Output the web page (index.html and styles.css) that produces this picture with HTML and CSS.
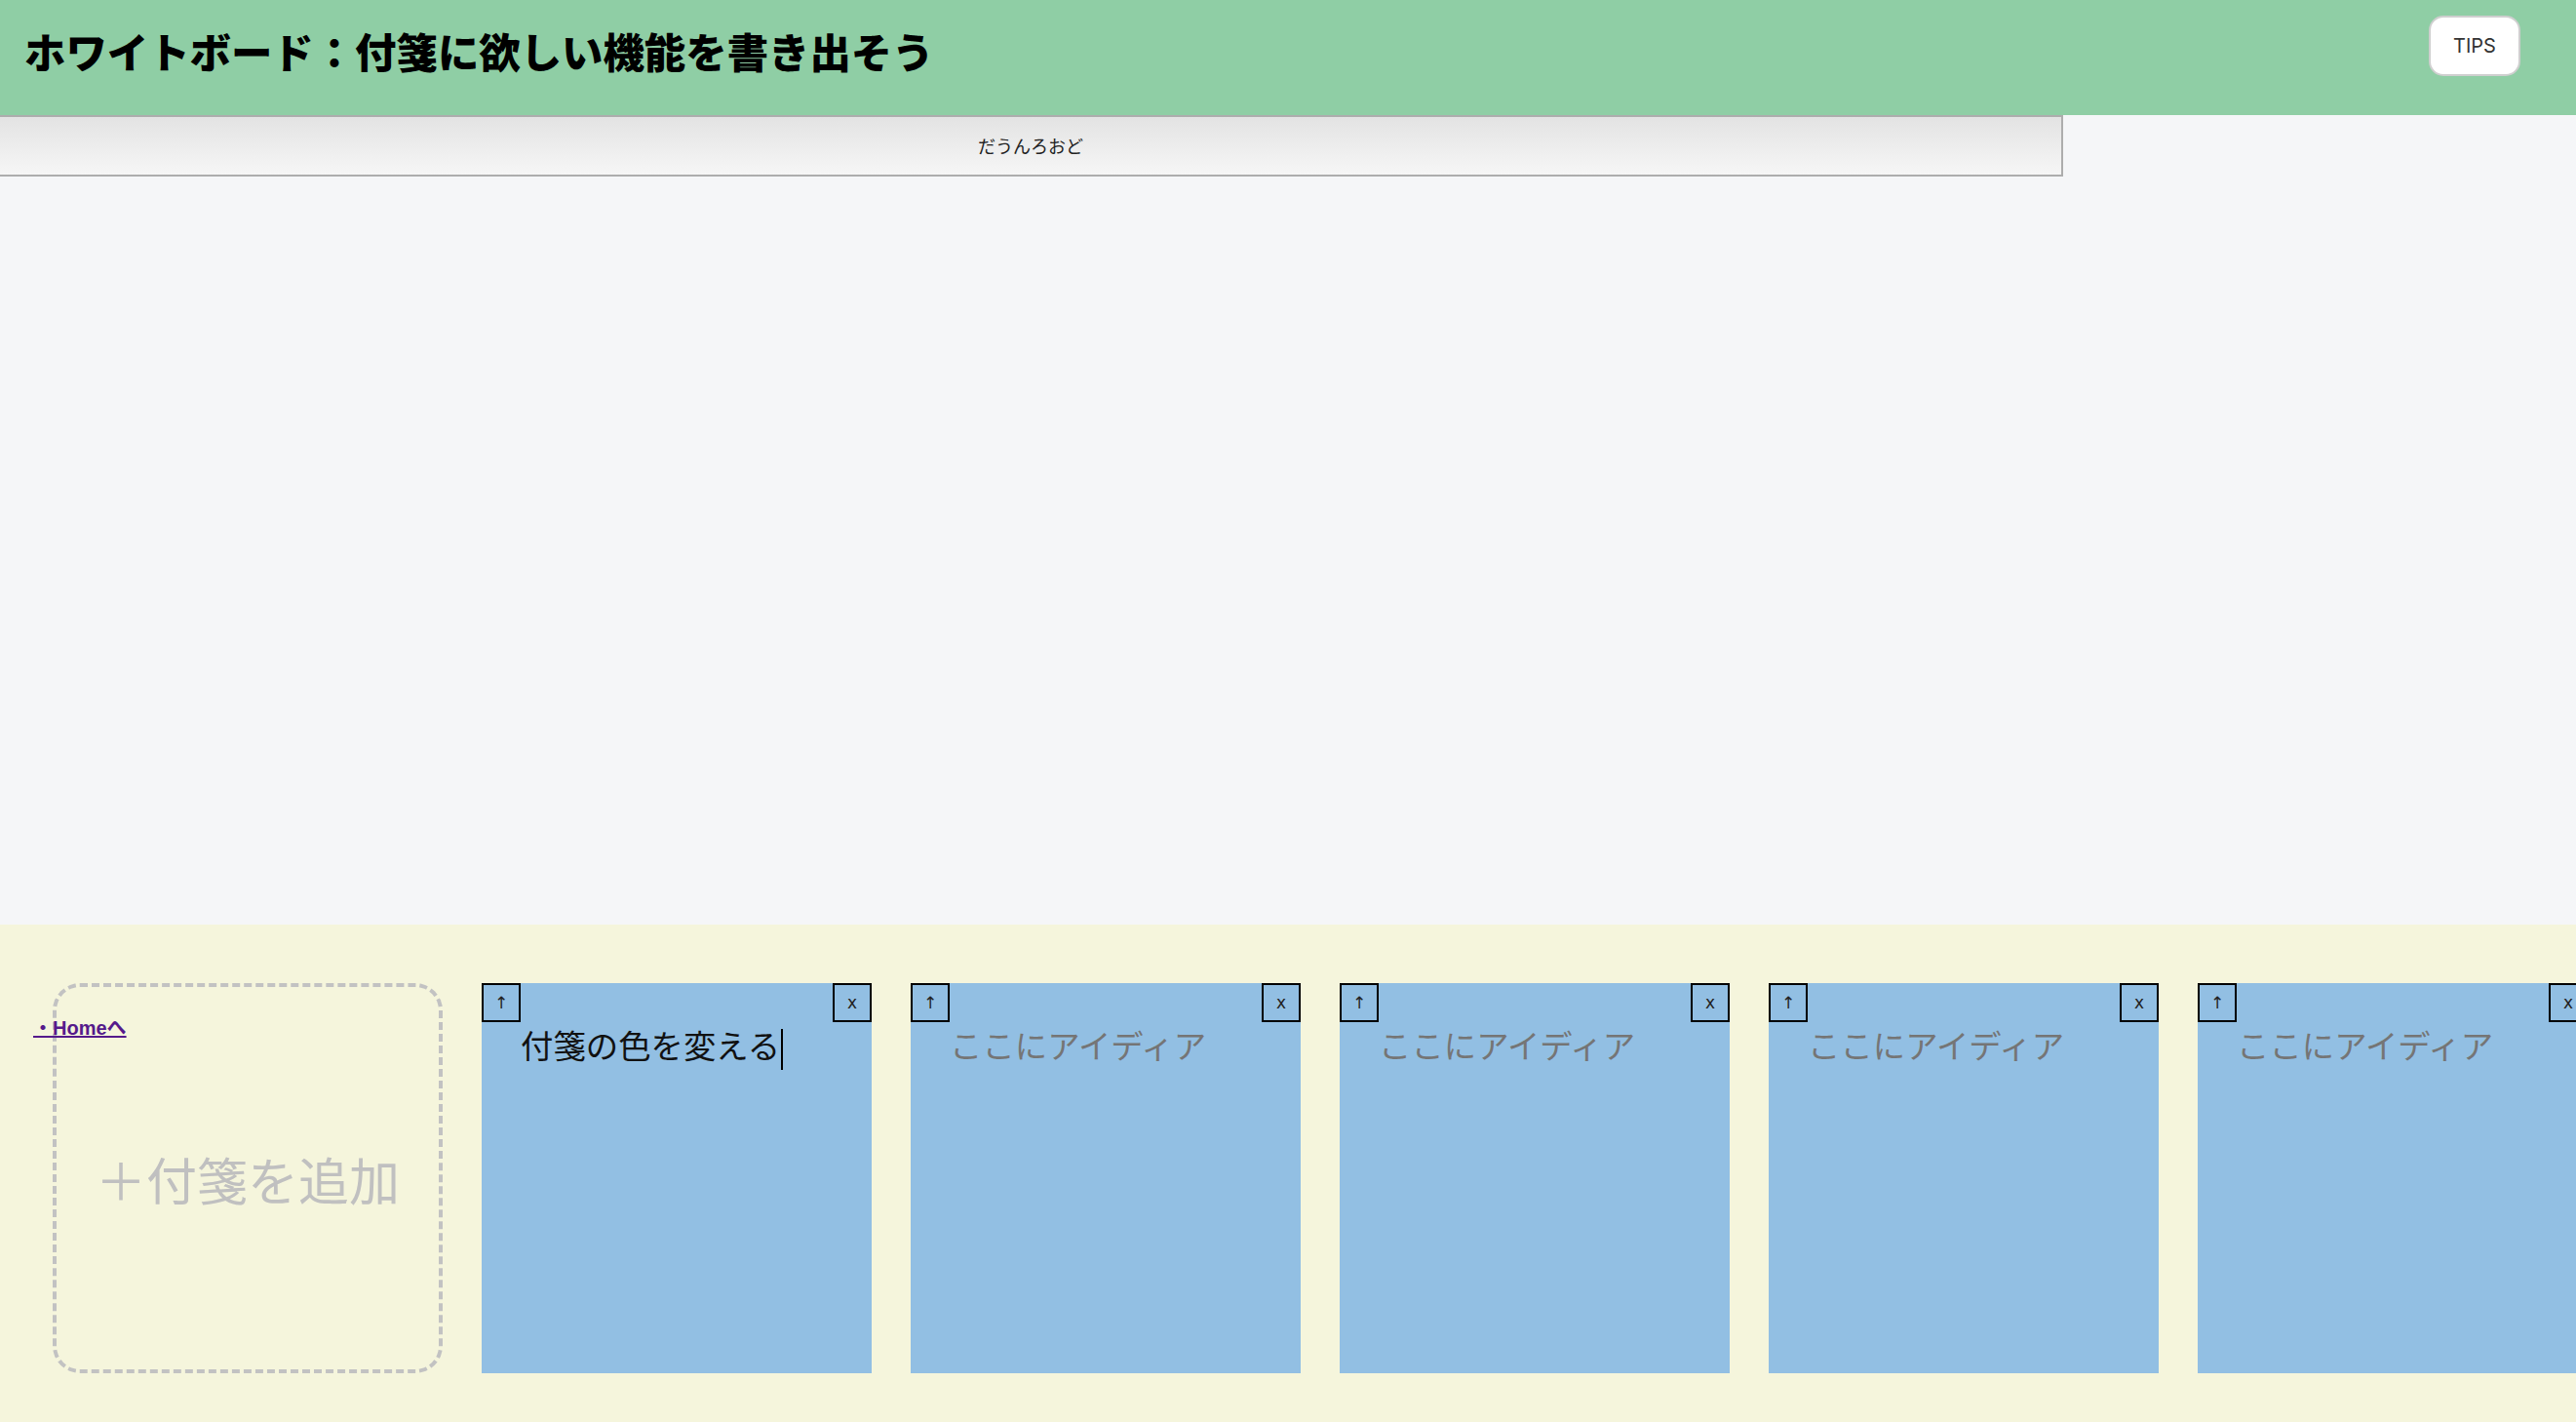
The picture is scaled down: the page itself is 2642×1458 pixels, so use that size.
FILE: index.html
```html
<!DOCTYPE html>
<html lang="ja">
<head>
<meta charset="utf-8">
<title>ホワイトボード</title>
<link rel="stylesheet" href="styles.css">
</head>
<body>
<header class="topbar">
  <h1 class="title">ホワイトボード：付箋に欲しい機能を書き出そう</h1>
  <button class="tips">TIPS</button>
</header>
<div class="download-row">
  <button class="download">だうんろおど</button>
</div>
<main class="board"></main>
<section class="tray">
  <a class="home" href="#">・Homeへ</a>
  <div class="add-card">＋付箋を追加</div>
  <div class="note">
    <div class="note-bar"><button class="note-btn">↑</button><button class="note-btn">x</button></div>
    <div class="note-text">付箋の色を変える<span class="caret"></span></div>
  </div>
  <div class="note">
    <div class="note-bar"><button class="note-btn">↑</button><button class="note-btn">x</button></div>
    <div class="note-text placeholder">ここにアイディア</div>
  </div>
  <div class="note">
    <div class="note-bar"><button class="note-btn">↑</button><button class="note-btn">x</button></div>
    <div class="note-text placeholder">ここにアイディア</div>
  </div>
  <div class="note">
    <div class="note-bar"><button class="note-btn">↑</button><button class="note-btn">x</button></div>
    <div class="note-text placeholder">ここにアイディア</div>
  </div>
  <div class="note">
    <div class="note-bar"><button class="note-btn">↑</button><button class="note-btn">x</button></div>
    <div class="note-text placeholder">ここにアイディア</div>
  </div>
</section>
</body>
</html>
```
FILE: styles.css
```css
html, body {
  margin: 0;
  height: 100%;
}
body {
  display: flex;
  flex-direction: column;
  height: 100vh;
  overflow: hidden;
  background: #f5f6f8;
  font-family: "Noto Sans CJK JP", "Noto Sans", sans-serif;
}
.topbar {
  flex: none;
  height: 118px;
  box-sizing: border-box;
  background: #8fcea5;
  display: flex;
  align-items: flex-start;
  justify-content: space-between;
  padding: 0 57px 0 25px;
}
.title {
  margin: 31px 0 0;
  font-size: 42.4px;
  line-height: 1;
  font-weight: 900;
  color: #000;
  font-family: "Noto Sans CJK JP", sans-serif;
}
.tips {
  margin-top: 16px;
  width: 94px;
  height: 62px;
  box-sizing: border-box;
  background: #fff;
  border: 2px solid #cfcfcf;
  border-radius: 15px;
  font-family: "Inter", "Liberation Sans", sans-serif;
  font-size: 20px;
  color: #333;
  padding: 0;
}
.download-row {
  flex: none;
  display: flex;
}
.download {
  width: 2116px;
  height: 63px;
  box-sizing: border-box;
  border: 2px solid #adadad;
  border-left: none;
  background: linear-gradient(#e3e3e3, #f6f6f6);
  font-family: "Noto Sans CJK JP", sans-serif;
  font-size: 18px;
  color: #222;
  padding: 0 0 2px 0;
}
.board {
  flex: 1;
}
.tray {
  flex: none;
  height: 510px;
  box-sizing: border-box;
  position: relative;
  background: #f5f5dc;
  display: flex;
  align-items: flex-start;
  gap: 40px;
  padding: 60px 0 0 54px;
  overflow: hidden;
}
.home {
  position: absolute;
  left: 34px;
  top: 90px;
  font-family: "Liberation Sans", "Noto Sans CJK JP", sans-serif;
  font-weight: bold;
  font-size: 20px;
  color: #551a8b;
  text-decoration: underline;
}
.add-card {
  flex: none;
  width: 400px;
  height: 400px;
  box-sizing: border-box;
  border: 4px dashed #c2c2c2;
  border-radius: 28px;
  display: flex;
  align-items: center;
  justify-content: center;
  font-size: 52px;
  color: #c0c0c0;
}
.note {
  flex: none;
  width: 400px;
  height: 400px;
  background: #92bfe3;
  display: flex;
  flex-direction: column;
}
.note-bar {
  display: flex;
  justify-content: space-between;
}
.note-btn {
  width: 40px;
  height: 40px;
  box-sizing: border-box;
  border: 2px solid #000;
  background: transparent;
  font-family: "DejaVu Sans", "Noto Sans", sans-serif;
  font-size: 17px;
  color: #222;
  padding: 0;
}
.note-text {
  padding: 1px 40px 0 40px;
  font-size: 33.4px;
  line-height: 1.3;
  color: #111;
}
.note-text.placeholder {
  color: #757575;
}
.caret {
  display: inline-block;
  width: 2px;
  height: 42px;
  margin-left: 1px;
  background: #000;
  vertical-align: middle;
}
```
